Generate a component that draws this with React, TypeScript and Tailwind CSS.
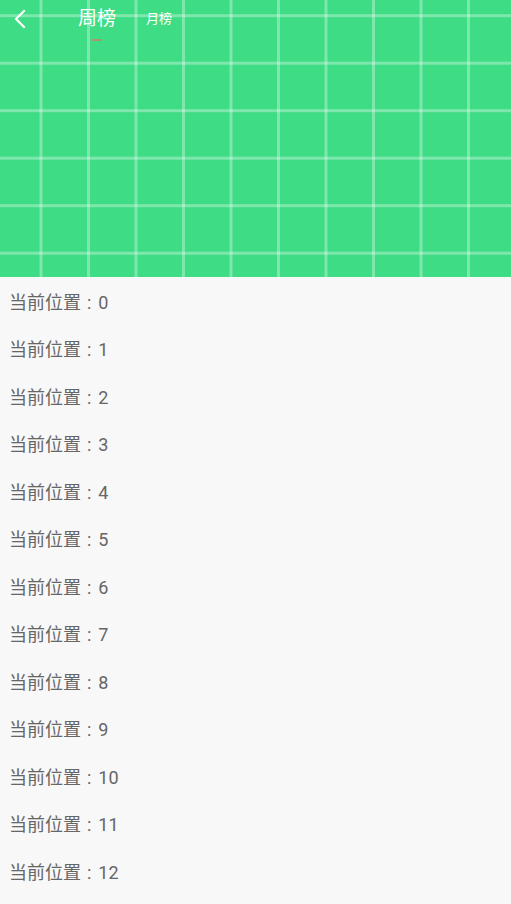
const rows = Array.from({ length: 13 }, (_, i) => i);
const cols = Array.from({ length: 10 }, (_, i) => 41 + i * 47.5);
const lines = Array.from({ length: 6 }, (_, i) => 15.7 + i * 47.5);

function GridPattern() {
  return (
    <svg className="absolute inset-0" width="511" height="277" viewBox="0 0 511 277">
      {cols.map((x) => (
        <rect key={`v${x}`} x={x - 1.5} y={0} width={3} height={277} fill="#fff" fillOpacity={0.33} />
      ))}
      {lines.map((y) => (
        <rect key={`h${y}`} x={0} y={y - 1.5} width={511} height={3} fill="#fff" fillOpacity={0.33} />
      ))}
    </svg>
  );
}

export default function App() {
  return (
    <div
      className="w-[511px] h-[904px] overflow-hidden bg-[#f8f8f8]"
      style={{ fontFamily: 'Roboto, "Noto Sans CJK SC", sans-serif' }}
    >
      <div className="relative h-[277px] bg-[#3edc84]">
        <GridPattern />
        <div className="relative flex items-start h-[48px]">
          <button className="w-[38px] h-[38px] flex items-center justify-center pl-[1px]">
            <svg width="14" height="20" viewBox="0 0 14 20" fill="none">
              <path d="M11 2 L3 10 L11 18" stroke="#fff" strokeWidth="2.2" strokeLinecap="square" />
            </svg>
          </button>
          <div className="ml-[40px] flex flex-col items-center">
            <span className="text-[19px] leading-[38px] text-white">周榜</span>
            <span className="mt-[1px] w-[10px] h-[2px] bg-[#b0956b]" />
          </div>
          <span className="ml-[30px] text-[13px] leading-[38px] text-white">月榜</span>
        </div>
      </div>
      <div className="flex flex-col">
        {rows.map((i) => (
          <div key={i} className="h-[47.5px] flex items-center pl-[9px] pt-[3px] text-[18px] text-[#666]">
            <span>当前位置</span>
            <span className="ml-[6px] mr-[7px]">:</span>
            <span>{i}</span>
          </div>
        ))}
      </div>
    </div>
  );
}
